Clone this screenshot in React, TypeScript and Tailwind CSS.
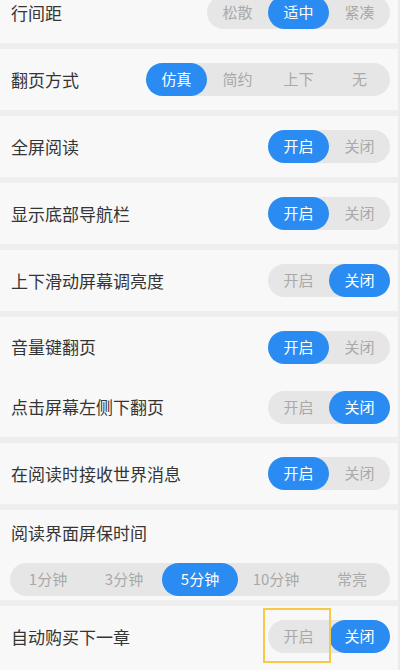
import React from "react";

type SegProps = { options: string[]; active: number; seg: number; highlight?: boolean };

function Seg({ options, active, seg, highlight }: SegProps) {
  return (
    <div className="relative flex h-[33px] rounded-full bg-[#e6e6e6]">
      {options.map((o, i) => (
        <div
          key={o}
          style={{ width: seg }}
          className={
            i === active
              ? "flex h-full items-center justify-center rounded-full bg-[#2a8cf2] text-[15px] text-white"
              : "flex h-full items-center justify-center text-[15px] text-[#a9a9a9]"
          }
        >
          {o}
        </div>
      ))}
      {highlight && (
        <div className="pointer-events-none absolute left-[-5px] top-[-12px] h-[55px] w-[68px] border-2 border-[#f7c948]" />
      )}
    </div>
  );
}

function Row({ label, children, h = "h-[61px]" }: { label: string; children: React.ReactNode; h?: string }) {
  return (
    <div className={`flex ${h} items-center justify-between pl-[11px] pr-[8px]`}>
      <span className="text-[17px] text-[#353535]">{label}</span>
      {children}
    </div>
  );
}

function Sep() {
  return <div className="h-[6px] bg-[#eeeeee]" />;
}

const onOff = ["开启", "关闭"];

export default function App() {
  return (
    <div
      className="h-[670px] w-[400px] overflow-hidden border-r-2 border-[#ebebeb] bg-[#f8f8f8]"
      style={{ fontFamily: '"Noto Sans CJK SC", "Noto Sans", sans-serif' }}
    >
      <div className="-mt-[18px]">
        <Row label="行间距">
          <Seg options={["松散", "适中", "紧凑"]} active={1} seg={61} />
        </Row>
      </div>
      <Sep />
      <Row label="翻页方式">
        <Seg options={["仿真", "简约", "上下", "无"]} active={0} seg={61} />
      </Row>
      <Sep />
      <Row label="全屏阅读">
        <Seg options={onOff} active={0} seg={61} />
      </Row>
      <Sep />
      <Row label="显示底部导航栏">
        <Seg options={onOff} active={0} seg={61} />
      </Row>
      <Sep />
      <Row label="上下滑动屏幕调亮度">
        <Seg options={onOff} active={1} seg={61} />
      </Row>
      <Sep />
      <Row label="音量键翻页" h="h-[60px]">
        <Seg options={onOff} active={0} seg={61} />
      </Row>
      <Row label="点击屏幕左侧下翻页" h="h-[60px]">
        <Seg options={onOff} active={1} seg={61} />
      </Row>
      <Sep />
      <Row label="在阅读时接收世界消息">
        <Seg options={onOff} active={0} seg={61} />
      </Row>
      <Sep />
      <div className="flex h-[90px] flex-col pl-[10px] pr-[8px]">
        <div className="pl-[1px] pt-[10px] text-[17px] leading-[26px] text-[#353535]">阅读界面屏保时间</div>
        <div className="mt-[17px]">
          <Seg options={["1分钟", "3分钟", "5分钟", "10分钟", "常亮"]} active={2} seg={76} />
        </div>
      </div>
      <Sep />
      <Row label="自动购买下一章">
        <Seg options={onOff} active={1} seg={61} highlight />
      </Row>
    </div>
  );
}
